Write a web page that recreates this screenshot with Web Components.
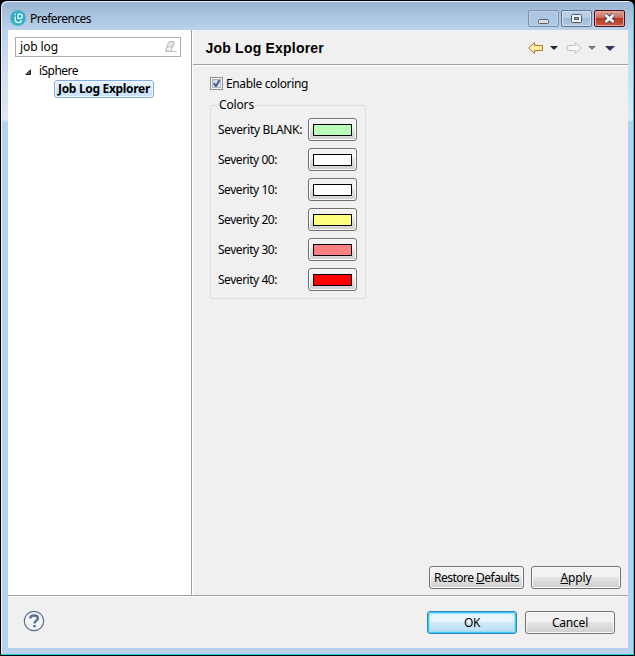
<!DOCTYPE html>
<html lang="en"><head><meta charset="utf-8"><title>Preferences</title>
<style>html,body{margin:0;width:635px;height:656px;overflow:hidden;background:#000}body{font:12px/16px "Noto Sans","Open Sans",sans-serif;color:#000}</style></head><body>
<pref-window></pref-window>
<script>
const define = (name, html, setup) => customElements.define(name, class extends HTMLElement {
  connectedCallback() {
    if (this.shadowRoot) return;
    const t = document.createElement('template');
    t.innerHTML = '<style>*{box-sizing:border-box}:host{box-sizing:border-box}svg{display:block}</style>' + html;
    this.attachShadow({mode: 'open'}).append(t.content.cloneNode(true));
    if (setup) setup(this, this.shadowRoot);
  }
});

// A label whose letter spacing is adjusted to fill the width in its "w" attribute.
define('fit-text', `<style>:host{display:inline-block;white-space:pre;flex:none}span{display:inline-block}</style><span><slot></slot></span>`, (el, root) => {
  const span = root.querySelector('span'), w = +el.getAttribute('w');
  const n = el.textContent.length, now = span.getBoundingClientRect().width;
  span.style.letterSpacing = (w - now) / n + 'px';
  el.style.width = w + 'px';
});

define('push-button', `<style>
:host{display:flex;height:23px;border:1px solid #707070;border-radius:3px;background:linear-gradient(#f2f2f2 0 45%,#e3e3e3 50%,#cfcfcf);box-shadow:inset 0 0 0 1px #fbfbfb;align-items:center;justify-content:center}
:host([primary]){border-color:#3c7fb1;background:linear-gradient(#eaf6fd 0 45%,#d2ebf8 50%,#b5dcf0);box-shadow:inset 0 0 0 1px #35cdf8,inset 0 0 1px 2px #8fe2f8}
</style><slot></slot>`);

define('color-row', `<style>:host{display:flex;height:30px;align-items:flex-start;justify-content:space-between}fit-text{margin-top:4px}
push-button{width:49px}i{display:block;width:39px;height:12px;border:1px solid #000}</style>
<fit-text></fit-text><push-button><i></i></push-button>`, (el, root) => {
  const f = root.querySelector('fit-text');
  const n = document.createElement('fit-text');
  n.setAttribute('w', el.getAttribute('w'));
  n.textContent = el.getAttribute('label');
  f.replaceWith(n);
  root.querySelector('i').style.background = el.getAttribute('color');
});

define('caption-button', `<style>:host{display:flex;width:31px;height:17px;border:1px solid #5d7590;border-radius:2px;background:linear-gradient(#b9cfe6 0 45%,#9db9d5 50%,#b5cde6);box-shadow:inset 0 0 0 1px #d0e0f0;align-items:center;justify-content:center}
:host([kind=min]){border-color:#7b92ae;background:linear-gradient(#acc4de,#b1cae3);box-shadow:inset 0 0 0 1px #bcd1e7}
:host([kind=close]){border-color:#4c111b;background:linear-gradient(#dba59b 0,#cd6c5c 45%,#b43724 50%,#c85c47);box-shadow:inset 0 0 0 1px #e2a89d}</style><slot></slot>`);

define('title-bar', `<style>:host{display:flex;height:28px;padding:0 2px}
.logo{margin:8px 4px 0 0}fit-text{margin-top:9px}.btns{display:flex;gap:2px;margin:8px 0 0 auto}</style>
<svg class="logo" width="16" height="16" viewBox="0 0 16 16"><defs><radialGradient id="g"><stop offset=".4" stop-color="#159eb5"/><stop offset="1" stop-color="#4db9cc"/></radialGradient></defs><circle cx="8" cy="8" r="8" fill="url(#g)"/><path d="M8 9.500V4.200h2a2 2 0 0 1 0 4.200H8M5.200 6.500v2.800c0 2.300 1.200 3.300 3 3.300s3-1 3-2.600M4.600 4.600h1.400" fill="none" stroke="#e7fafd" stroke-width="1.500"/></svg>
<fit-text w="61">Preferences</fit-text>
<div class="btns">
<caption-button kind="min"><svg width="13" height="12"><rect x="1.500" y="6.500" width="10" height="4" rx="1" fill="#ddd" stroke="#53606f"/></svg></caption-button>
<caption-button><svg width="12" height="11"><rect x=".5" y="1.500" width="10" height="8" rx="1" fill="#f5f5f5" stroke="#4b5365"/><rect x="3.500" y="4.500" width="4" height="2" fill="#9ab4d2" stroke="#4b5365"/></svg></caption-button>
<caption-button kind="close"><svg width="13" height="11"><path d="M2.500 2l8 7M10.500 2l-8 7" stroke="#4e4d5b" stroke-width="4.800"/><path d="M2.500 2l8 7M10.500 2l-8 7" stroke="#f5f5f5" stroke-width="2.600"/></svg></caption-button></div>`);

define('search-box', `<style>:host{display:flex;height:20px;border:1px solid #abadb3;background:#fff;justify-content:space-between;padding:1px 2px 0 4px}</style>
<fit-text w="38">job log</fit-text><svg width="15" height="16"><path d="M2.500 11.500l3-8q.5-1 1.500-1h3q1.500 0 1 1.500l-3 7.500q-.5 1-1.500 1h-3q-1.200 0-1-1z" fill="#e6e6e6" stroke="#b5b5b5"/><path d="M4 8h5l-1.500 4H3z" fill="#fff" stroke="#c2c2c2"/><path d="M7 12.500h7" stroke="#c5c5c5"/></svg>`);

define('pref-tree', `<style>:host{display:block}.r{display:flex;height:18px;align-items:center}.r svg{margin:2px 8px 0 10px}.sel{margin-left:39px;width:100px;border:1px solid #84acdd;border-radius:3px;background:linear-gradient(#e9f2fd,#c6dffb);box-shadow:inset 0 0 0 1px #f1f7fe;font-weight:bold;justify-content:center}</style>
<div class="r"><svg width="6" height="6"><path d="M5.500.8v4.700H.8z" fill="#595959" stroke="#262626"/></svg><fit-text w="39">iSphere</fit-text></div><div class="r sel"><fit-text w="92">Job Log Explorer</fit-text></div>`);

define('page-header', `<style>:host{display:flex;height:36px;border-bottom:1px solid #fff;box-shadow:inset 0 -1px #a0a0a0;padding:0 12.5px}
.t{font:bold 14px/17px "Liberation Sans",Arial,sans-serif;margin-top:10px}svg{margin:10px 0 0 auto}</style><fit-text class="t" w="118.500">Job Log Explorer</fit-text>
<svg width="88" height="16"><path d="M.8 8L6.500 2.500v3h8v5h-8v3z" fill="#ffedaa" stroke="#b87c13" stroke-linejoin="round"/><path d="M22 6h8l-4 4z" fill="#222"/><path d="M53 8l-5.700-5.500v3h-8v5h8v3z" fill="#f5f5f1" stroke="#c3c5bd" stroke-linejoin="round"/><path d="M60 6h8l-4 4z" fill="#777"/><path d="M77 6h10l-5 5z" fill="#35305f"/></svg>`);

define('check-box', `<style>:host{display:flex;gap:3px;height:16px;align-items:center}b{display:block;width:13px;height:13px;border:1px solid #8e8f8f;background:#f4f4f4;padding:1px;margin-top:-1px}svg{background:linear-gradient(135deg,#c5cbd2,#f3f4f5);outline:1px solid #aeb3b9;outline-offset:-1px}</style><b><svg width="9" height="9"><path d="M1.800 4.200L4 7.300l3.700-6.500" fill="none" stroke="#3c579f" stroke-width="1.900"/></svg></b><slot></slot>`);

define('group-box', `<style>:host{display:grid;width:156px}fieldset{margin:0;min-width:0;border:1px solid #d5dfe5;border-radius:3px;padding:5px 8px 0 7px;height:202px}legend{padding:0 1px;margin-left:0;height:16px}</style>
<fieldset><legend><fit-text w="35">Colors</fit-text></legend><slot></slot></fieldset>`);

define('help-icon', `<style>:host{display:block}</style><svg width="22" height="22"><circle cx="11" cy="11" r="9.700" fill="#f4f4f4" stroke="#5b6f92" stroke-width="1.200"/><path d="M7.300 8.500C7.300 6.300 9 5.500 11 5.500s3.900.8 3.900 2.900c0 2.200-3.400 2.300-3.400 5" fill="none" stroke="#5b6f92" stroke-width="2.400"/><path d="M10.200 15h2.600v2.300h-2.600z" fill="#5b6f92"/></svg>`);

define('pref-window', `<style>
:host{display:flex;flex-direction:column;width:635px;height:656px;border:1px solid #000;border-radius:7px 7px 0 0;padding:1px 7px 7px 7px;box-shadow:inset -1px -1px #22c9e5,inset 1px 1px #e5f0fa;background:linear-gradient(#99b4d1,#b9d1ea 28px,#cbdcef 60px,#dce8f5 119px,#b9d1ea 121px)}
.client{width:620px;height:618px;background:#f0f0f0;display:flex;flex-direction:column}
.body{display:flex;height:565px}.side{width:183px;background:#fff;padding:7px 10px 0 7px}.side pref-tree{margin-top:5px}
.main{flex:1;border-left:1px solid #a0a0a0;box-shadow:inset 1px 0 #fff;padding-left:1px;display:flex;flex-direction:column}
.content{padding:10px 0 0 17px;flex:1}group-box{margin-top:5px}.acts{display:flex;gap:7px;padding:0 7px 6px;justify-content:flex-end}
.foot{flex:1;border-top:1px solid #a0a0a0;box-shadow:inset 0 1px #fff;display:flex;padding:15px 13px 0 15px;gap:8px}.foot help-icon{margin:-1px auto 0 0}</style>
<title-bar></title-bar><div class="client"><div class="body"><div class="side"><search-box></search-box><pref-tree></pref-tree></div>
<div class="main"><page-header></page-header><div class="content"><check-box><fit-text w="82">Enable coloring</fit-text></check-box>
<group-box><color-row label="Severity BLANK:" w="84" color="#b9ffb9"></color-row><color-row label="Severity 00:" w="59" color="#fff"></color-row><color-row label="Severity 10:" w="59" color="#fff"></color-row><color-row label="Severity 20:" w="59" color="#ffff80"></color-row><color-row label="Severity 30:" w="59" color="#ff8080"></color-row><color-row label="Severity 40:" w="59" color="#f00"></color-row></group-box></div>
<div class="acts"><push-button style="width:95px"><fit-text w="85">Restore <u>D</u>efaults</fit-text></push-button><push-button style="width:90px"><fit-text w="31"><u>A</u>pply</fit-text></push-button></div></div></div>
<div class="foot"><help-icon></help-icon><push-button primary style="width:90px"><fit-text w="16">OK</fit-text></push-button><push-button style="width:90px"><fit-text w="36">Cancel</fit-text></push-button></div></div>`);
</script></body></html>
